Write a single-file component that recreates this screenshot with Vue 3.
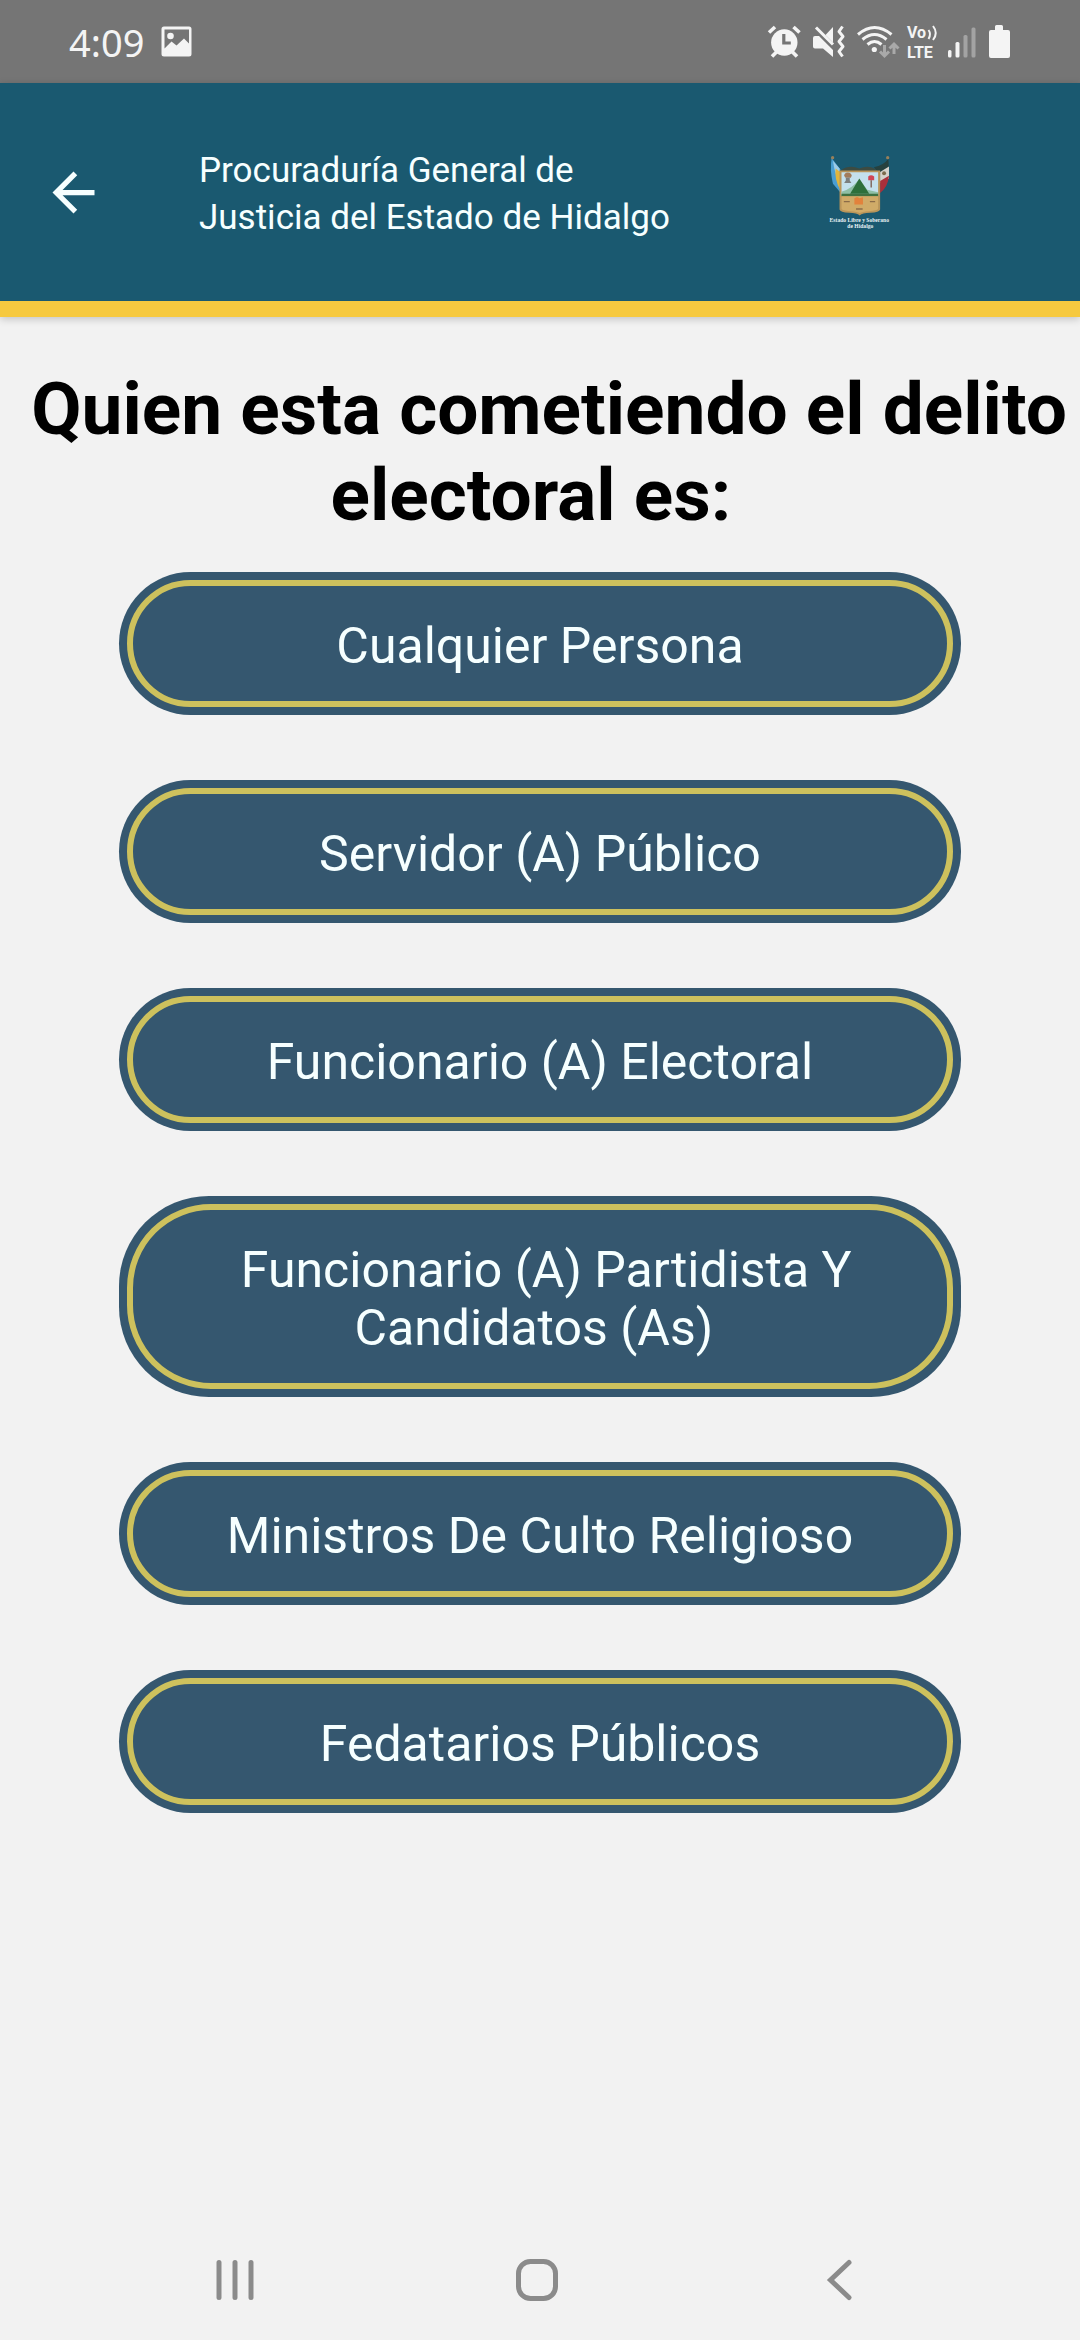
<template>
  <div class="screen">
    <div class="status-bar">
      <div class="status-bar__left">
        <span class="clock">4:09</span>
        <svg width="31" height="31" viewBox="0 0 31 31" aria-hidden="true">
          <path
            fill="#f4f4f4"
            fill-rule="evenodd"
            d="M3 0.500h25a2.500 2.500 0 0 1 2.500 2.500v25a2.500 2.500 0 0 1-2.500 2.500H3a2.500 2.500 0 0 1-2.500-2.500V3A2.500 2.500 0 0 1 3 .5zM3.500 3.500v19l7-7 5 4 7.500-7 5 5v-14z"
          />
          <circle cx="9.500" cy="10" r="3.300" fill="#f4f4f4" />
        </svg>
      </div>
      <div class="status-bar__right">
        <!-- alarm -->
        <svg width="34" height="34" viewBox="0 0 34 34" aria-hidden="true">
          <g stroke="#f4f4f4" stroke-width="3.600">
            <path d="M2 7.500 8 2M26.500 2l6 5.500M5 31.500l5-5M30 31.500l-5-5" />
          </g>
          <circle cx="17.300" cy="17.500" r="13.200" fill="#f4f4f4" />
          <path d="M16.800 9v9h7" fill="none" stroke="#757575" stroke-width="3.200" />
        </svg>
        <!-- mute with vibration -->
        <svg width="34" height="34" viewBox="0 0 34 34" aria-hidden="true">
          <path fill="#f4f4f4" d="M1 13a2 2 0 0 1 2-2h4l14 14v7l-10-8.500H3a2 2 0 0 1-2-2zM21 2v15.500L13.500 10z" />
          <path d="M4 2.500 21 19.500" stroke="#f4f4f4" stroke-width="3" />
          <path
            d="M30.500 1.500 27 6.500l4 5-4 5 4 5-4 5 3.500 5"
            fill="none"
            stroke="#f4f4f4"
            stroke-width="3"
            stroke-linejoin="round"
          />
        </svg>
        <!-- wifi -->
        <svg width="39" height="34" viewBox="0 0 39 34" aria-hidden="true">
          <g fill="none" stroke="#f4f4f4" stroke-width="3">
            <path d="M1 9.500Q17.500-4.500 34.500 9.500" />
            <path d="M5.500 14.500Q17.500 4.500 29.500 14.500" />
            <path d="M10.500 19.500Q17.500 13.500 24.500 19.500" />
          </g>
          <circle cx="17.300" cy="24.500" r="2.600" fill="#f4f4f4" />
          <g fill="none" stroke="#a9a9a9" stroke-width="3">
            <path d="M27.500 20v10M23 26.500l4.500 4.500 4.500-4.500M37 29V20M32.500 23.500 37 19l4.500 4.500" />
          </g>
        </svg>
        <!-- volte -->
        <svg width="30" height="34" viewBox="0 0 30 34" aria-hidden="true">
          <text class="volte" x="0" y="13">Vo</text>
          <text class="volte" x="0" y="33">LTE</text>
          <g fill="none" stroke="#f4f4f4" stroke-width="2">
            <path d="M21.500 5q3 4 0 9M26 1q5.500 7 0 14" />
          </g>
        </svg>
        <!-- signal -->
        <svg width="28" height="34" viewBox="0 0 28 34" aria-hidden="true">
          <rect x="0" y="25" width="3.500" height="7.500" rx="1.500" fill="#f4f4f4" />
          <rect x="7.500" y="17" width="4" height="15.500" rx="1.500" fill="#f4f4f4" />
          <rect x="15.500" y="10" width="4" height="22.500" rx="1.500" fill="#a3a3a3" />
          <rect x="23.500" y="2.500" width="4" height="30" rx="1.500" fill="#a3a3a3" />
        </svg>
        <!-- battery -->
        <svg width="24" height="34" viewBox="0 0 24 34" aria-hidden="true">
          <path
            fill="#f4f4f4"
            d="M9.500 0h5A1.500 1.500 0 0 1 16 1.500V5h5a2 2 0 0 1 2 2v24a2 2 0 0 1-2 2H4a2 2 0 0 1-2-2V7a2 2 0 0 1 2-2h4V1.500A1.500 1.500 0 0 1 9.500 0z"
          />
        </svg>
      </div>
    </div>

    <header class="header">
      <button class="back-btn" type="button" aria-label="Regresar">
        <svg width="63" height="63" viewBox="0 0 24 24">
          <path fill="#f6ffff" d="M20 11H7.830l5.590-5.590L12 4l-8 8 8 8 1.410-1.410L7.830 13H20v-2z" />
        </svg>
      </button>
      <p class="header__title">Procuraduría General de Justicia del Estado de Hidalgo</p>
      <svg class="crest" width="62" height="74" viewBox="55 50 188 222" role="img" aria-label="Escudo de Hidalgo">
        <!-- flags -->
        <path d="M66 58q-6 38 4 78l22 26V92z" fill="#4a9ed2" />
        <path d="M70 66l20 24v40q-14-20-20-64z" fill="#9ccbe8" />
        <path d="M78 90q-4 34 14 64V100z" fill="#e0b53c" />
        <path d="M238 60q-14 20-44 26l20 24 26-12z" fill="#26413f" />
        <path d="M240 84l-27 16v34l27-14z" fill="#d5d2cb" />
        <path d="M240 112l-27 16v36q24-18 27-52z" fill="#a92f3b" />
        <circle cx="225" cy="104" r="6" fill="#7b6b4c" />
        <circle cx="69" cy="57" r="5" fill="#98805a" />
        <circle cx="236" cy="57" r="5" fill="#98805a" />
        <path d="M90 98q28-22 60-8 32-14 56 8z" fill="#3c4b42" />
        <!-- shield -->
        <path d="M90 96h123v118q-2 9-30 10-24 1-32 8-8-7-32-8-27-1-29-10z" fill="#b9955a" />
        <path d="M96 101h111v70H96z" fill="#c4e0ed" />
        <path d="M96 160q30-8 54-38l24 32 33 8v10H96z" fill="#8fbfa6" />
        <path d="M122 166l28-46 30 46z" fill="#2d6f3b" />
        <path d="M96 166h111v8H96z" fill="#3f7142" />
        <path d="M104 112q0-9 11-10 11 1 12 10l-3 6h-16z" fill="#a27b5b" />
        <path d="M109 118h12v8l5 8h-22l5-8z" fill="#7c7f7f" />
        <path d="M177 114q8-7 18 0v11h-18z" fill="#d04555" />
        <path d="M184 125h4v22h-4z" fill="#7a5b50" />
        <path d="M96 174h111v38q-3 6-27 7-22 1-29 6-7-5-29-6-23-1-26-7z" fill="#d0ab68" />
        <path d="M135 180l8-4 8 4 10-3v22h-26z" fill="#e2823c" />
        <path d="M103 188h18v4h-18zM182 188h16v4h-16zM140 210h20v5h-20z" fill="#8b6c48" />
        <text class="crest__caption" x="150" y="253">Estado Libre y Soberano</text>
        <text class="crest__caption" x="153" y="271">de Hidalgo</text>
      </svg>
    </header>

    <main class="content">
      <h1 class="question">&nbsp;Quien esta cometiendo el delito electoral es:&nbsp;</h1>
      <div class="options">
        <button v-for="option in options" :key="option" class="option-btn" type="button">
          <span class="option-btn__label">&nbsp;{{ option }}&nbsp;</span>
        </button>
      </div>
    </main>

    <nav class="nav-bar">
      <button class="nav-btn" type="button" aria-label="Recientes">
        <svg width="42" height="42" viewBox="0 0 42 42">
          <path d="M5 3.500v35M21 3.500v35M37 3.500v35" stroke="#8b8b8b" stroke-width="5" stroke-linecap="round" />
        </svg>
      </button>
      <button class="nav-btn" type="button" aria-label="Inicio">
        <svg width="42" height="42" viewBox="0 0 42 42">
          <rect x="2.500" y="2.500" width="37" height="37" rx="12" fill="none" stroke="#8b8b8b" stroke-width="5" />
        </svg>
      </button>
      <button class="nav-btn" type="button" aria-label="Atrás">
        <svg width="42" height="42" viewBox="0 0 42 42">
          <path
            d="M31 3.500 12.500 21 31 38.500"
            fill="none"
            stroke="#8b8b8b"
            stroke-width="5"
            stroke-linecap="round"
          />
        </svg>
      </button>
    </nav>
  </div>
</template>

<script setup>
const options = [
  'Cualquier Persona',
  'Servidor (A) Público',
  'Funcionario (A) Electoral',
  'Funcionario (A) Partidista Y Candidatos (As)',
  'Ministros De Culto Religioso',
  'Fedatarios Públicos'
]
</script>

<style>
body {
  margin: 0;
  background: #f2f2f2;
}
</style>

<style scoped>
.screen {
  min-height: 100vh;
  display: flex;
  flex-direction: column;
  background: #f2f2f2;
  font-family: Roboto, sans-serif;
}

.screen svg {
  display: block;
  flex: none;
  overflow: visible;
}

.status-bar {
  height: 83px;
  padding: 0 69px;
  box-sizing: border-box;
  display: flex;
  align-items: center;
  justify-content: space-between;
  background: #757575;
}

.status-bar__left {
  display: flex;
  align-items: center;
  gap: 17px;
}

.status-bar__right {
  display: flex;
  align-items: center;
  gap: 11px;
}

.clock {
  color: #f4f4f4;
  font-family: 'Noto Sans', sans-serif;
  font-size: 38px;
  line-height: 48px;
}

.volte {
  fill: #f4f4f4;
  font-family: Roboto, sans-serif;
  font-size: 16px;
  font-weight: 700;
}

.header {
  padding: 60px 190px 60px 42px;
  display: flex;
  align-items: center;
  border-bottom: 16px solid #f6c93f;
  background: #1a5970;
  box-shadow: 0 2px 8px rgba(0, 0, 0, 0.2);
}

.back-btn {
  padding: 0;
  border: none;
  background: none;
  cursor: pointer;
}

.header__title {
  max-width: 500px;
  margin: 0 auto 0 94px;
  padding-top: 4px;
  color: #f6ffff;
  font-size: 35px;
  line-height: 47px;
}

.crest__caption {
  fill: #e8f2f5;
  font-family: 'Liberation Serif', serif;
  font-size: 17px;
  font-weight: 700;
  text-anchor: middle;
}

.content {
  flex: 1;
  padding: 49px 0;
}

.question {
  margin: 0 0 34px;
  color: #000000;
  font-size: 73px;
  font-weight: 700;
  line-height: 86px;
  text-align: center;
}

.options {
  display: flex;
  flex-direction: column;
  align-items: center;
  gap: 65px;
}

.option-btn {
  width: 78%;
  padding: 8px;
  border: none;
  border-radius: 90px;
  background: #35576f;
  color: #f6ffff;
  font-family: inherit;
  font-size: 50px;
  line-height: 58px;
  cursor: pointer;
}

.option-btn__label {
  display: block;
  padding: 31px 80px 26px;
  border: 6px solid #cdc15d;
  border-radius: 84px;
}

.nav-bar {
  height: 120px;
  padding: 0 90px 0 84px;
  display: flex;
}

.nav-btn {
  flex: 1;
  padding: 0;
  display: flex;
  align-items: center;
  justify-content: center;
  border: none;
  background: none;
  cursor: pointer;
}
</style>
